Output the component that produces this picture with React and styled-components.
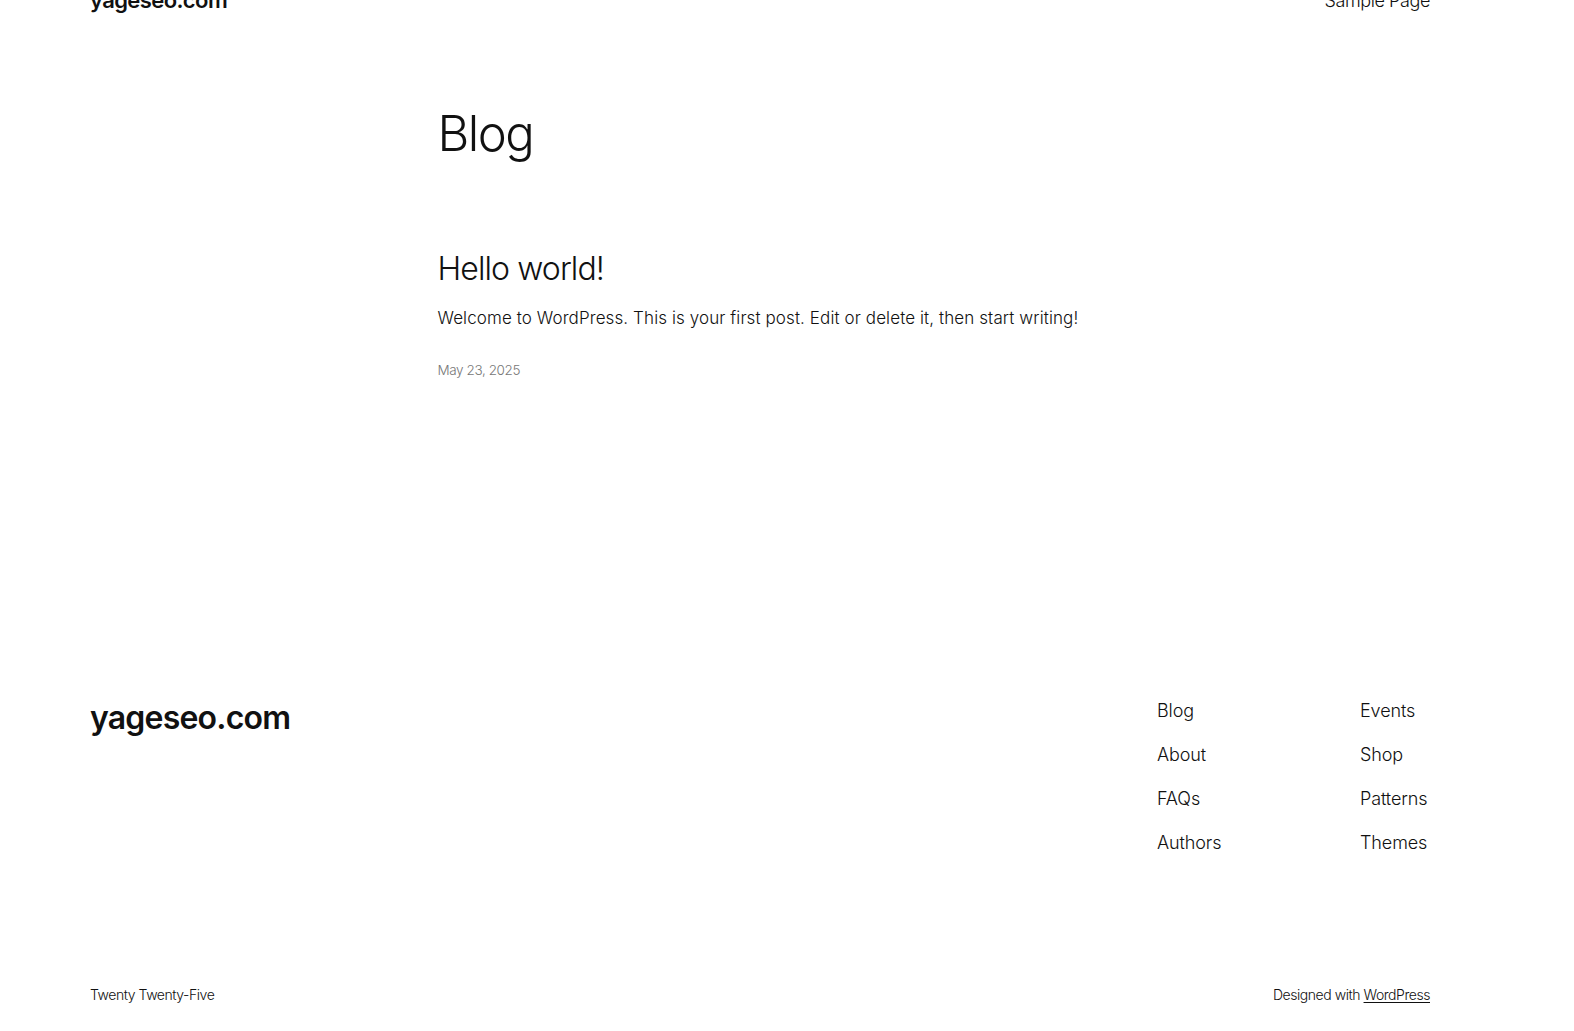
import React from 'react';
import styled, { createGlobalStyle } from 'styled-components';

const GlobalStyle = createGlobalStyle`
  html, body {
    margin: 0;
    padding: 0;
    background: #ffffff;
    color: #111111;
    font-family: Inter, "Noto Sans", sans-serif;
  }
`;

const Page = styled.div`
  width: 1340px;
  margin-left: 90px;
  margin-top: -20px;
`;

const Header = styled.header`
  display: flex;
  justify-content: space-between;
  align-items: center;
  height: 40px;
`;

const SiteTitle = styled.a`
  font-size: ${p => p.$size}px;
  font-weight: 600;
  letter-spacing: ${p => p.$spacing}px;
  color: #111;
  text-decoration: none;
  line-height: 1;
`;

const NavLink = styled.a`
  font-size: 18px;
  font-weight: 300;
  letter-spacing: -0.4px;
  color: #111;
  text-decoration: none;
`;

const Main = styled.main`
  width: 645px;
  margin: 0 auto;
  padding-top: 85px;
  min-height: 682px;
  box-sizing: border-box;
`;

const PageTitle = styled.h1`
  margin: 0;
  font-size: 49px;
  font-weight: 300;
  letter-spacing: -1.5px;
  line-height: 1.2;
`;

const Post = styled.article`
  margin-top: 86px;
`;

const PostTitle = styled.h2`
  margin: 0;
  font-size: 32px;
  font-weight: 300;
  letter-spacing: -0.9px;
  line-height: 1.2;
`;

const Excerpt = styled.p`
  margin: 19px 0 0;
  font-size: 17px;
  font-weight: 300;
  letter-spacing: 0.1px;
  line-height: 1.4;
`;

const PostDate = styled.div`
  margin-top: 31px;
  font-size: 13.5px;
  font-weight: 300;
  letter-spacing: -0.4px;
  color: #777;
`;

const Footer = styled.footer`
  display: flex;
  justify-content: space-between;
  align-items: flex-start;
`;

const FooterNav = styled.nav`
  display: grid;
  grid-template-columns: 203px 70px;
  row-gap: 22px;
  margin-top: -2px;
`;

const FooterLink = styled.a`
  font-size: 18px;
  font-weight: 300;
  letter-spacing: -0.1px;
  line-height: 22px;
  color: #111;
  text-decoration: none;
  white-space: nowrap;
`;

const BottomBar = styled.div`
  display: flex;
  justify-content: space-between;
  margin-top: 132px;
  font-size: 14px;
  font-weight: 300;
  letter-spacing: -0.45px;
  color: #111;
`;

const Credit = styled.a`
  color: #111;
  text-decoration: underline;
  text-underline-offset: 2px;
`;

const leftLinks = ['Blog', 'About', 'FAQs', 'Authors'];
const rightLinks = ['Events', 'Shop', 'Patterns', 'Themes'];

const App = () => {
  const links = [];
  leftLinks.forEach((l, i) => {
    links.push(<FooterLink key={l}>{l}</FooterLink>);
    links.push(<FooterLink key={rightLinks[i]}>{rightLinks[i]}</FooterLink>);
  });

  return (
    <>
      <GlobalStyle />
      <Page>
        <Header>
          <SiteTitle $size={22} $spacing={-0.6}>yageseo.com</SiteTitle>
          <NavLink>Sample Page</NavLink>
        </Header>
        <Main>
          <PageTitle>Blog</PageTitle>
          <Post>
            <PostTitle>Hello world!</PostTitle>
            <Excerpt>Welcome to WordPress. This is your first post. Edit or delete it, then start writing!</Excerpt>
            <PostDate>May 23, 2025</PostDate>
          </Post>
        </Main>
        <Footer>
          <SiteTitle $size={32} $spacing={-0.8}>yageseo.com</SiteTitle>
          <FooterNav>{links}</FooterNav>
        </Footer>
        <BottomBar>
          <span>Twenty Twenty-Five</span>
          <span>Designed with <Credit>WordPress</Credit></span>
        </BottomBar>
      </Page>
    </>
  );
};

export default App;
